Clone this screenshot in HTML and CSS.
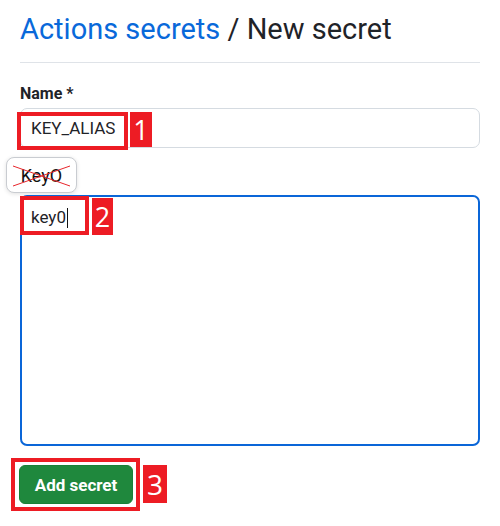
FILE: index.html
```html
<!DOCTYPE html>
<html>
<head>
<meta charset="utf-8">
<link rel="stylesheet" href="styles.css">
</head>
<body>
<div class="page">
  <h1 class="title"><a class="crumb">Actions secrets</a> / New secret</h1>
  <div class="field">
    <label class="label">Name *</label>
    <div class="control">
      <div class="input">KEY_ALIAS</div>
      <span class="mark mark-1"></span>
      <span class="num num-1">1</span>
    </div>
  </div>
  <div class="field field-value">
    <label class="label">Value *</label>
    <div class="tip"><span class="tip-text">KeyO</span>
      <svg class="cross" width="60" height="24" viewBox="0 0 60 24"><path d="M1 2 L58 22 M1 22 L58 2" stroke="#e8262c" stroke-width="1" fill="none"/></svg>
    </div>
    <div class="control">
      <div class="textarea"><span class="typed">key0</span><span class="caret"></span></div>
      <span class="mark mark-2"></span>
      <span class="num num-2">2</span>
    </div>
  </div>
  <div class="actions">
    <button class="btn">Add secret</button>
    <span class="mark mark-3"></span>
    <span class="num num-3">3</span>
  </div>
</div>
</body>
</html>
```
FILE: styles.css
```css
* { box-sizing: border-box; }
body { margin: 0; background: #fff; font-family: Roboto, "Liberation Sans", sans-serif; color: #1f2328; }
.page { padding: 9px 20px 0; }
.title { margin: 0; font-size: 29px; font-weight: 400; line-height: 40px; padding-bottom: 13px; border-bottom: 1px solid #dfe3e8; letter-spacing: 0; }
.crumb { color: #0969da; }
.field { margin-top: 21px; position: relative; }
.field-value { margin-top: 23px; }
.label { display: block; font-size: 16px; font-weight: 700; line-height: 20px; margin-bottom: 4px; }
.control { position: relative; }
.input { height: 40px; border: 1px solid #d5dbe1; border-radius: 7px; padding: 0 10px; font-size: 17px; line-height: 38px; }
.textarea { height: 251px; border: 2px solid #0a66d8; border-radius: 7px; padding: 0 9px; font-size: 17px; line-height: 40px; display: flex; align-items: flex-start; }
.typed { line-height: 40px; }
.caret { display: inline-block; width: 1.5px; height: 20px; background: #111; margin-top: 11px; margin-left: 1px; }
.mark { position: absolute; border: 4px solid #ed1c24; }
.num { position: absolute; background: #ed1c24; color: #fff; font-family: "Open Sans", "Noto Sans", sans-serif; font-size: 27px; display: flex; align-items: center; justify-content: center; line-height: 1; }
.mark-1 { left: -3px; top: 4px; width: 111px; height: 38px; }
.num-1 { left: 110px; top: 4px; width: 22px; height: 35px; }
.mark-2 { left: 0; top: 1px; width: 69px; height: 39px; }
.num-2 { left: 72px; top: 3px; width: 21px; height: 37px; }
.tip { position: absolute; left: -14px; top: -14px; width: 71px; height: 36px; background: #fff; border: 1px solid #c9ccd1; border-radius: 8px; box-shadow: 0 1px 4px rgba(0,0,0,0.12); display: flex; align-items: center; justify-content: center; }
.tip-text { font-size: 18px; font-weight: 400; color: #111; }
.cross { position: absolute; left: 5px; top: 6px; }
.actions { position: relative; margin-top: 19px; display: flex; height: 46px; }
.btn { margin-left: -1px; width: 114px; height: 39px; background: #1f883d; color: #fff; border: 1px solid #1a7f37; border-radius: 6px; font-family: Roboto, "Liberation Sans", sans-serif; font-weight: 700; font-size: 17px; padding: 0; }
.mark-3 { left: -9px; top: -7px; width: 129px; height: 53px; }
.num-3 { left: 123px; top: 0; width: 24px; height: 38px; font-size: 28px; }
```
